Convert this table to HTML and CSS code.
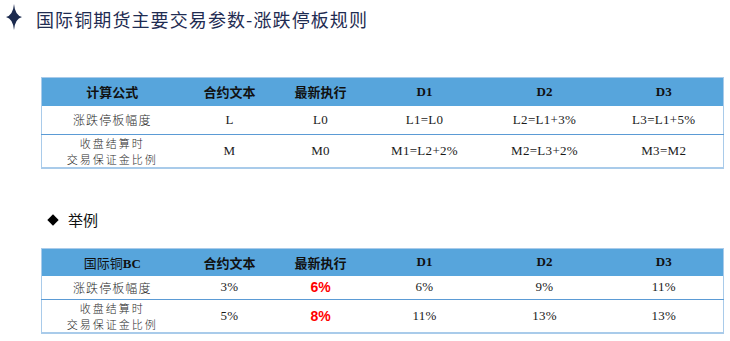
FILE: index.html
```html
<!DOCTYPE html>
<html lang="zh">
<head>
<meta charset="utf-8">
<link rel="stylesheet" href="styles.css">
</head>
<body>
<div class="page">
  <div class="title-row">
    <svg class="star" width="16" height="26" viewBox="0 0 16 26"><path d="M8 0 Q9 11.3 16 13 Q9 14.7 8 26 Q7 14.7 0 13 Q7 11.3 8 0 Z" fill="#1b2a4e"/></svg>
    <h1 class="title">国际铜期货主要交易参数-涨跌停板规则</h1>
  </div>

  <table class="grid t1">
    <colgroup>
      <col class="c1"><col class="c2"><col class="c3"><col class="c4"><col class="c5"><col class="c6">
    </colgroup>
    <thead>
      <tr class="head h1">
        <th class="cjk">计算公式</th><th class="cjk">合约文本</th><th class="cjk">最新执行</th><th class="lat">D1</th><th class="lat">D2</th><th class="lat">D3</th>
      </tr>
    </thead>
    <tbody>
      <tr class="r1">
        <td class="zh">涨跌停板幅度</td><td class="en">L</td><td class="en">L0</td><td class="en">L1=L0</td><td class="en">L2=L1+3%</td><td class="en">L3=L1+5%</td>
      </tr>
      <tr class="r2">
        <td class="zh two"><span class="ln">收盘结算时</span><span class="ln">交易保证金比例</span></td><td class="en">M</td><td class="en">M0</td><td class="en">M1=L2+2%</td><td class="en">M2=L3+2%</td><td class="en">M3=M2</td>
      </tr>
    </tbody>
  </table>

  <div class="section">
    <span class="diamond"></span>
    <span class="section-label">举例</span>
  </div>

  <table class="grid t2">
    <colgroup>
      <col class="c1"><col class="c2"><col class="c3"><col class="c4"><col class="c5"><col class="c6">
    </colgroup>
    <thead>
      <tr class="head h2">
        <th class="mix">国际铜<b>BC</b></th><th class="cjk">合约文本</th><th class="cjk">最新执行</th><th class="lat">D1</th><th class="lat">D2</th><th class="lat">D3</th>
      </tr>
    </thead>
    <tbody>
      <tr class="r3">
        <td class="zh">涨跌停板幅度</td><td class="en">3%</td><td class="red">6%</td><td class="en">6%</td><td class="en">9%</td><td class="en">11%</td>
      </tr>
      <tr class="r2">
        <td class="zh two"><span class="ln">收盘结算时</span><span class="ln">交易保证金比例</span></td><td class="en">5%</td><td class="red">8%</td><td class="en">11%</td><td class="en">13%</td><td class="en">13%</td>
      </tr>
    </tbody>
  </table>
</div>
</body>
</html>
```

FILE: styles.css
```css
html, body {
  margin: 0;
  padding: 0;
  background: #ffffff;
}

.page {
  width: 730px;
  height: 341px;
  overflow: hidden;
  font-family: "Noto Sans CJK SC", "Liberation Sans", sans-serif;
}

.title-row {
  display: flex;
  align-items: flex-start;
  padding: 4px 0 0 6px;
  height: 77px;
  box-sizing: border-box;
}

.star {
  display: block;
  flex: none;
}

.title {
  margin: 1px 0 0 14px;
  font-size: 18px;
  line-height: 28px;
  font-weight: 400;
  color: #1f2c52;
  letter-spacing: 1.1px;
}

.grid {
  margin-left: 41px;
  width: 682px;
  table-layout: fixed;
  border-collapse: collapse;
  border: 1px solid #a9cbea;
  border-bottom: 2px solid #a9cbea;
}

.c1 { width: 141px; }
.c2 { width: 94px; }
.c3 { width: 88px; }
.c4 { width: 120px; }
.c5 { width: 120px; }
.c6 { width: 119px; }

.grid th,
.grid td {
  padding: 0;
  text-align: center;
  vertical-align: middle;
}

.head {
  background: #57a5dc;
}

.h1 { height: 28px; }
.h2 { height: 27px; }
.r1 { height: 29px; }
.r2 { height: 32px; }
.r3 { height: 24px; }

.grid tbody tr + tr td {
  border-top: 1px solid #5b9bd5;
}

.cjk {
  font-family: "Noto Sans CJK SC", sans-serif;
  font-weight: 700;
  font-size: 13px;
  color: #111111;
}

.lat {
  font-family: "Liberation Serif", serif;
  font-weight: 700;
  font-size: 13px;
  color: #111111;
}

.mix {
  font-family: "Noto Sans CJK SC", sans-serif;
  font-weight: 400;
  font-size: 13px;
  color: #111111;
}

.mix b {
  font-family: "Liberation Serif", serif;
  font-weight: 700;
}

.zh {
  font-family: "Noto Sans CJK SC", sans-serif;
  font-weight: 300;
  font-size: 12px;
  line-height: 15px;
  letter-spacing: 1.1px;
  color: #2a2a2a;
}

.zh.two .ln {
  display: block;
  font-size: 11px;
  letter-spacing: 2px;
  height: 16px;
  line-height: 16px;
}

.en {
  font-family: "Liberation Serif", serif;
  font-size: 13px;
  color: #1a1a1a;
  letter-spacing: 0.3px;
}

.red {
  font-family: "Liberation Sans", sans-serif;
  font-weight: 700;
  font-size: 14px;
  color: #ff0000;
}

.section {
  display: flex;
  align-items: flex-start;
  height: 79px;
  padding: 40px 0 0 48px;
  box-sizing: border-box;
}

.diamond {
  width: 8px;
  height: 8px;
  margin: 7px 0 0 1px;
  background: #000000;
  transform: rotate(45deg);
  flex: none;
}

.section-label {
  margin-left: 11px;
  font-size: 15px;
  line-height: 22px;
  color: #111111;
}
```
